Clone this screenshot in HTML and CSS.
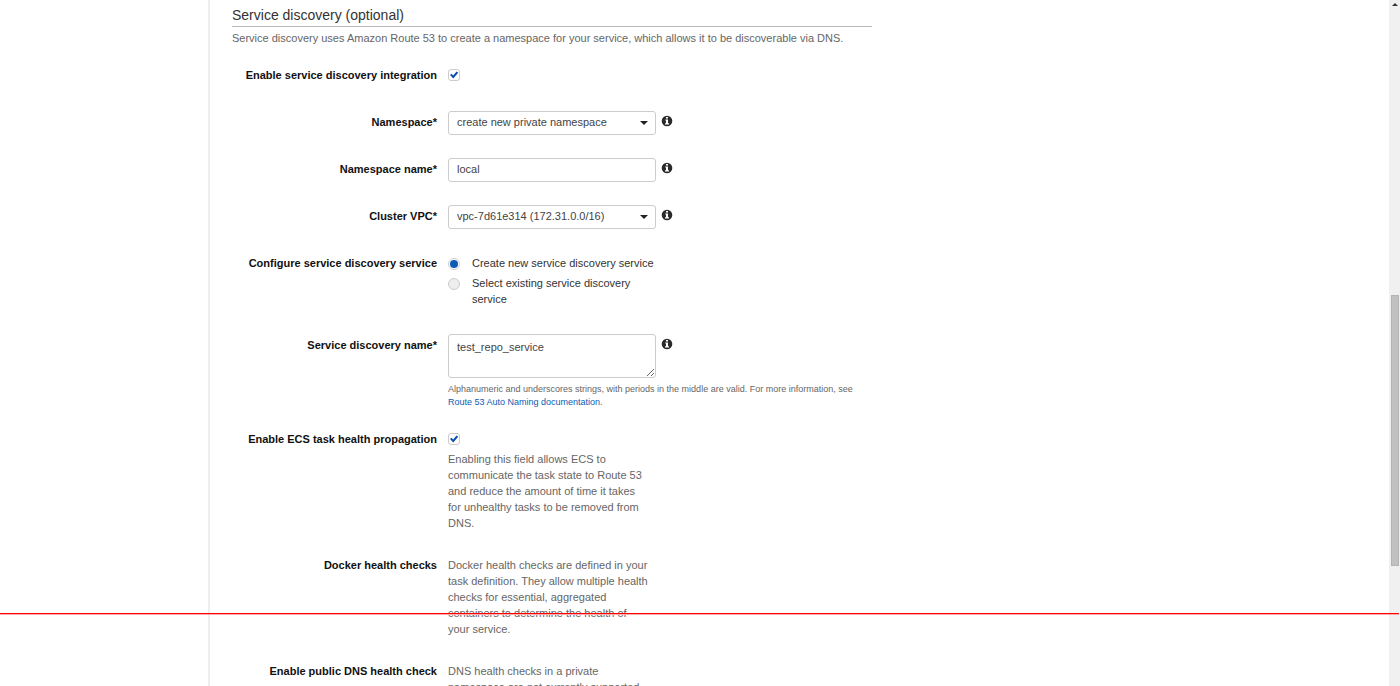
FILE: index.html
```html
<!DOCTYPE html>
<html lang="en">
<head>
    <meta charset="utf-8">
    <title>Service discovery</title>
    <link rel="stylesheet" href="styles.css">
</head>
<body>

    <svg class="sprite" width="0" height="0" aria-hidden="true">
        <symbol id="info" viewBox="0 0 12 12">
            <circle cx="6" cy="6" r="5.3" fill="#2b2b2b"/>
            <path d="M5 2h2v1.5H5zM4.3 4.4H7V8.3h1v1.3H4V8.3h1V5.6h-.7z" fill="#fff"/>
        </symbol>
    </svg>

    <div class="page">
        <aside class="sidebar"></aside>

        <main class="content">
            <form class="form">
                <h2>Service discovery (optional)</h2>
                <p class="intro">Service discovery uses Amazon Route 53 to create a namespace for your service, which allows it to be discoverable via DNS.</p>

                <div class="row">
                    <label class="name" for="enable">Enable service discovery integration</label>
                    <div class="field"><input type="checkbox" id="enable" checked></div>
                </div>

                <div class="row">
                    <label class="name" for="namespace">Namespace*</label>
                    <div class="field">
                        <div class="line">
                            <span class="select"><select id="namespace"><option>create new private namespace</option></select></span>
                            <svg class="info"><use href="#info"/></svg>
                        </div>
                    </div>
                </div>

                <div class="row">
                    <label class="name" for="namespace-name">Namespace name*</label>
                    <div class="field">
                        <div class="line">
                            <input type="text" id="namespace-name" value="local">
                            <svg class="info"><use href="#info"/></svg>
                        </div>
                    </div>
                </div>

                <div class="row">
                    <label class="name" for="vpc">Cluster VPC*</label>
                    <div class="field">
                        <div class="line">
                            <span class="select"><select id="vpc"><option>vpc-7d61e314 (172.31.0.0/16)</option></select></span>
                            <svg class="info"><use href="#info"/></svg>
                        </div>
                    </div>
                </div>

                <div class="row" role="radiogroup" aria-labelledby="configure">
                    <span class="name" id="configure">Configure service discovery service</span>
                    <div class="field options">
                        <label class="option"><input type="radio" name="service" checked><span>Create new service discovery service</span></label>
                        <label class="option"><input type="radio" name="service"><span>Select existing service discovery service</span></label>
                    </div>
                </div>

                <div class="row has-hint">
                    <label class="name" for="service-name">Service discovery name*</label>
                    <div class="field">
                        <div class="line">
                            <textarea id="service-name">test_repo_service</textarea>
                            <svg class="info"><use href="#info"/></svg>
                        </div>
                        <p class="hint">Alphanumeric and underscores strings, with periods in the middle are valid. For more information, see <a href="#">Route 53 Auto Naming documentation</a>.</p>
                    </div>
                </div>

                <div class="row">
                    <label class="name" for="propagation">Enable ECS task health propagation</label>
                    <div class="field">
                        <input type="checkbox" id="propagation" checked>
                        <p class="text">Enabling this field allows ECS to communicate the task state to Route 53 and reduce the amount of time it takes for unhealthy tasks to be removed from DNS.</p>
                    </div>
                </div>

                <div class="row">
                    <span class="name">Docker health checks</span>
                    <div class="field text-only">
                        <p class="text">Docker health checks are defined in your task definition. They allow multiple health checks for essential, aggregated containers to determine the health of your service.</p>
                    </div>
                </div>

                <div class="row">
                    <span class="name">Enable public DNS health check</span>
                    <div class="field text-only">
                        <p class="text">DNS health checks in a private namespace are not currently supported.</p>
                    </div>
                </div>
            </form>
        </main>

        <div class="scrollbar">
            <div class="arrow"></div>
            <div class="thumb"></div>
        </div>

        <div class="marker"></div>
    </div>

</body>
</html>
```
FILE: styles.css
```css
* { box-sizing: border-box; }
body { margin: 0; background: #fff; color: #333; font: 11px/16px "Liberation Sans", Arial, sans-serif; }
.sprite { position: absolute; }

.page { position: relative; display: flex; height: 100vh; overflow: hidden; }
.sidebar { flex: 0 0 208px; }
.content { flex: 1; min-width: 0; border-left: 2px solid #eee; padding: 6px 22px; }
.form { max-width: 640px; }

h2 { margin: 0; padding-bottom: 1px; border-bottom: 1px solid #bbb; font-size: 14px; line-height: 19px; font-weight: normal; color: #333; }
.intro { margin: 3px 0 18px; color: #666; }

/* rows */
.row { display: grid; grid-template-columns: 205px 1fr; column-gap: 11px; margin-bottom: 23px; }
.has-hint { margin-bottom: 19px; }
.name { padding-top: 3px; text-align: right; font-weight: bold; color: #111; }
.field { min-height: 24px; }
.line { display: flex; align-items: flex-start; gap: 5px; }
.info { width: 12px; height: 12px; margin-top: 4px; }

.text { width: 201px; margin: 0; color: #666; }
.text-only { padding-top: 3px; }
.hint { margin: 5px 0 0; font-size: 9px; line-height: 13px; color: #666; }
a { color: #0b5cb5; text-decoration: none; }

/* controls */
input, select, textarea { appearance: none; margin: 0; font: inherit; color: #444; background: #fff; border: 1px solid #ccc; border-radius: 3px; }
input[type=text], select, textarea { display: block; width: 208px; height: 24px; padding: 0 8px 2px; }
textarea { height: 44px; padding: 4px 8px; resize: vertical; }

.select { position: relative; }
.select::after { content: ""; position: absolute; right: 8px; top: 10px; border: 4px solid transparent; border-top-color: #222; border-bottom: 0; pointer-events: none; }

input[type=checkbox] { display: block; width: 12px; height: 12px; margin: 5px 0 6px; }
input[type=checkbox]:checked::before { content: ""; display: block; width: 10px; height: 10px; background: #0a4fae; clip-path: polygon(10% 50%, 25% 38%, 41% 54%, 76% 14%, 92% 27%, 43% 86%); }

.options { padding: 3px 0 4px; }
.option { display: flex; width: 208px; gap: 12px; margin-bottom: 4px; }
.option:last-child { margin-bottom: 0; }
input[type=radio] { flex: none; width: 12px; height: 12px; margin-top: 3px; border-radius: 50%; background: #eee; }
input[type=radio]:checked { background: #fff; }
input[type=radio]:checked::before { content: ""; display: block; width: 8px; height: 8px; margin: 1px; border-radius: 50%; background: #0b5cb5; }

/* window scrollbar */
.scrollbar { display: flex; flex-direction: column; flex: 0 0 11px; background: #f0f0f0; }
.arrow { width: 0; margin: 3px auto 0; border: 3px solid transparent; border-bottom-color: #333; border-top: 0; }
.thumb { width: 8px; height: 271px; margin: 289px auto 0; background: #c1c1c1; border: 1px solid #b4b4b4; }

.marker { position: absolute; left: 0; right: 1px; bottom: 71px; height: 2px; background: #f00; border-bottom: 1px solid #faa; }
```
